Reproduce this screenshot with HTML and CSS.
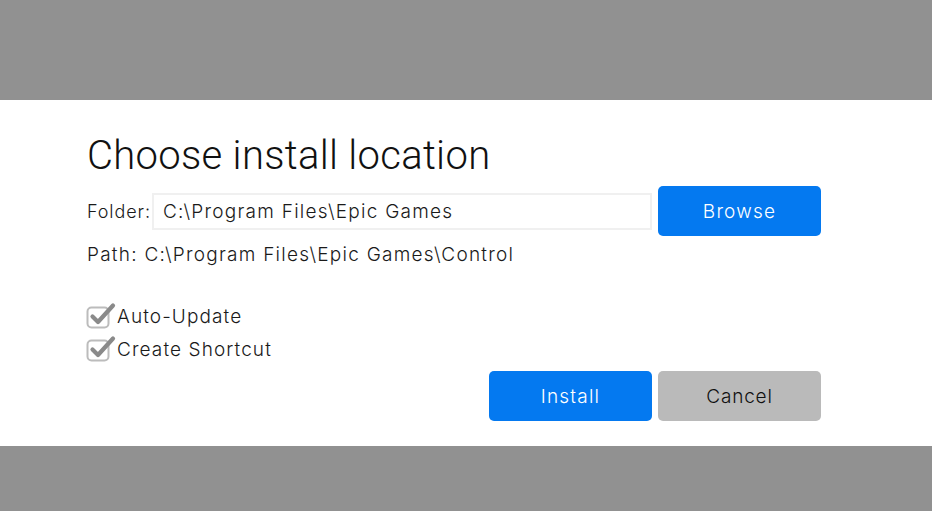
FILE: index.html
```html
<!DOCTYPE html>
<html>
<head>
<meta charset="utf-8">
<link rel="stylesheet" href="styles.css">
</head>
<body>
<div class="backdrop">
  <div class="dialog">
    <h1 class="title">Choose install location</h1>
    <div class="folder-row">
      <span class="label">Folder:</span>
      <div class="input">C:\Program Files\Epic Games</div>
      <button class="btn btn-primary browse">Browse</button>
    </div>
    <div class="path">Path: C:\Program Files\Epic Games\Control</div>
    <div class="options">
      <label class="check">
        <svg class="box" width="31" height="30" viewBox="0 0 31 30">
          <rect x="1.5" y="7.5" width="21" height="20" rx="4" fill="none" stroke="#bcbcbc" stroke-width="2"/>
          <path d="M6.5 16.5 L12 22 L27 5.5" fill="none" stroke="#8a8a8a" stroke-width="4.2" stroke-linecap="round" stroke-linejoin="round"/>
        </svg>
        <span>Auto-Update</span>
      </label>
      <label class="check">
        <svg class="box" width="31" height="30" viewBox="0 0 31 30">
          <rect x="1.5" y="7.5" width="21" height="20" rx="4" fill="none" stroke="#bcbcbc" stroke-width="2"/>
          <path d="M6.5 16.5 L12 22 L27 5.5" fill="none" stroke="#8a8a8a" stroke-width="4.2" stroke-linecap="round" stroke-linejoin="round"/>
        </svg>
        <span>Create Shortcut</span>
      </label>
    </div>
    <div class="actions">
      <button class="btn btn-primary">Install</button>
      <button class="btn btn-secondary">Cancel</button>
    </div>
  </div>
</div>
</body>
</html>
```
FILE: styles.css
```css
html, body {
  margin: 0;
  padding: 0;
  background: #919191;
  height: 100%;
}
body {
  font-family: Inter, Roboto, "Liberation Sans", sans-serif;
  color: #1a1a1a;
}
.backdrop {
  padding-top: 100px;
}
.dialog {
  background: #ffffff;
  height: 346px;
  box-sizing: border-box;
  padding: 28px 111px 0 87px;
}
.title {
  margin: 0;
  font-family: Roboto, sans-serif;
  font-size: 40px;
  font-weight: 300;
  line-height: 56px;
  letter-spacing: 0.3px;
  color: #111;
}
.folder-row {
  display: flex;
  align-items: center;
  margin-top: 2px;
  height: 50px;
}
.label {
  font-size: 18px;
  font-weight: 300;
  width: 65px;
  flex: none;
  letter-spacing: 0.9px;
}
.input {
  width: 500px;
  height: 37px;
  box-sizing: border-box;
  border: 2px solid #f0f0f0;
  padding-left: 9px;
  font-size: 19px;
  font-weight: 300;
  line-height: 33px;
  letter-spacing: 1.25px;
}
.btn {
  border: none;
  border-radius: 5px;
  width: 163px;
  height: 50px;
  font-family: inherit;
  font-size: 19px;
  font-weight: 300;
  letter-spacing: 1.2px;
  padding: 0;
}
.btn-primary {
  background: #0479f0;
  color: #fff;
}
.btn-secondary {
  background: #bababa;
  color: #111;
  letter-spacing: 0.8px;
}
.browse {
  margin-left: 6px;
}
.path {
  font-size: 19px;
  font-weight: 300;
  margin-top: 7px;
  line-height: 24px;
  letter-spacing: 1.25px;
}
.options {
  margin-top: 35px;
  display: flex;
  flex-direction: column;
  gap: 5px;
}
.check {
  display: flex;
  align-items: center;
  font-size: 19px;
  font-weight: 300;
  letter-spacing: 1.1px;
  height: 28px;
}
.check .box {
  margin-left: -1px;
  margin-right: 0;
  margin-top: -2px;
}
.actions {
  display: flex;
  justify-content: flex-end;
  gap: 6px;
  margin-top: 8px;
}
```
